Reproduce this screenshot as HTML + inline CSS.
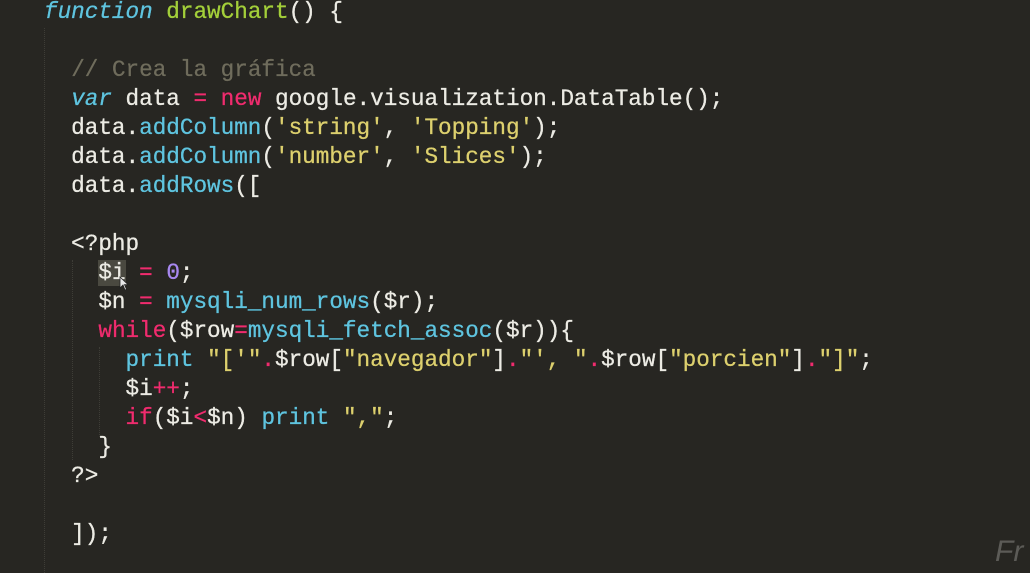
<!DOCTYPE html>
<html><head><meta charset="utf-8"><style>
html,body{margin:0;padding:0;background:#272622;width:1030px;height:573px;overflow:hidden}
pre{margin:0;position:absolute;left:44px;top:-2px;font-family:"Liberation Mono",monospace;font-size:22.65px;line-height:29px;color:#ecebe4;-webkit-text-stroke:0.3px;text-shadow:0 0 1px rgba(0,0,0,0.3)}
.k{color:#5fc4df;font-style:italic}.f{color:#a3cf3a}.c{color:#6f6c5c}.p{color:#ef2c6e}.s{color:#ddd06e}.n{color:#a888f0}.b{color:#5fc4df}
.g{position:absolute;width:0;border-left:1px dotted #3e3d37}
.sel{background:#4a4940}
.fr{position:absolute;left:995px;top:535px;font-family:"Liberation Sans",sans-serif;font-style:italic;font-size:30px;color:#5c5b57}
.cur{position:absolute;left:119px;top:276px}
</style></head><body>
<div class="g" style="left:44px;top:28px;height:545px"></div>
<div class="g" style="left:72px;top:260px;height:200px"></div>
<div class="g" style="left:99px;top:347px;height:90px"></div>
<pre><span class="k">function</span> <span class="f">drawChart</span>() {

  <span class="c">// Crea la gráfica</span>
  <span class="k">var</span> data <span class="p">=</span> <span class="p">new</span> google.visualization.DataTable();
  data.<span class="b">addColumn</span>(<span class="s">'string'</span>, <span class="s">'Topping'</span>);
  data.<span class="b">addColumn</span>(<span class="s">'number'</span>, <span class="s">'Slices'</span>);
  data.<span class="b">addRows</span>([

  &lt;?php
    <span class="sel">$i</span> <span class="p">=</span> <span class="n">0</span>;
    $n <span class="p">=</span> <span class="b">mysqli_num_rows</span>($r);
    <span class="p">while</span>($row<span class="p">=</span><span class="b">mysqli_fetch_assoc</span>($r)){
      <span class="b">print</span> <span class="s">"['"</span><span class="p">.</span>$row[<span class="s">"navegador"</span>]<span class="p">.</span><span class="s">"', "</span><span class="p">.</span>$row[<span class="s">"porcien"</span>]<span class="p">.</span><span class="s">"]"</span>;
      $i<span class="p">++</span>;
      <span class="p">if</span>($i<span class="p">&lt;</span>$n) <span class="b">print</span> <span class="s">","</span>;
    }
  ?&gt;

  ]);</pre>
<svg class="cur" width="10" height="16" viewBox="0 0 10 16"><path d="M1 1 L1 12 L4 9 L6 14 L7.5 13.4 L5.5 8.6 L9 8.6 Z" fill="#e8e8e8" stroke="#222" stroke-width="0.8"/></svg>
<div class="fr">Fr</div>
</body></html>
